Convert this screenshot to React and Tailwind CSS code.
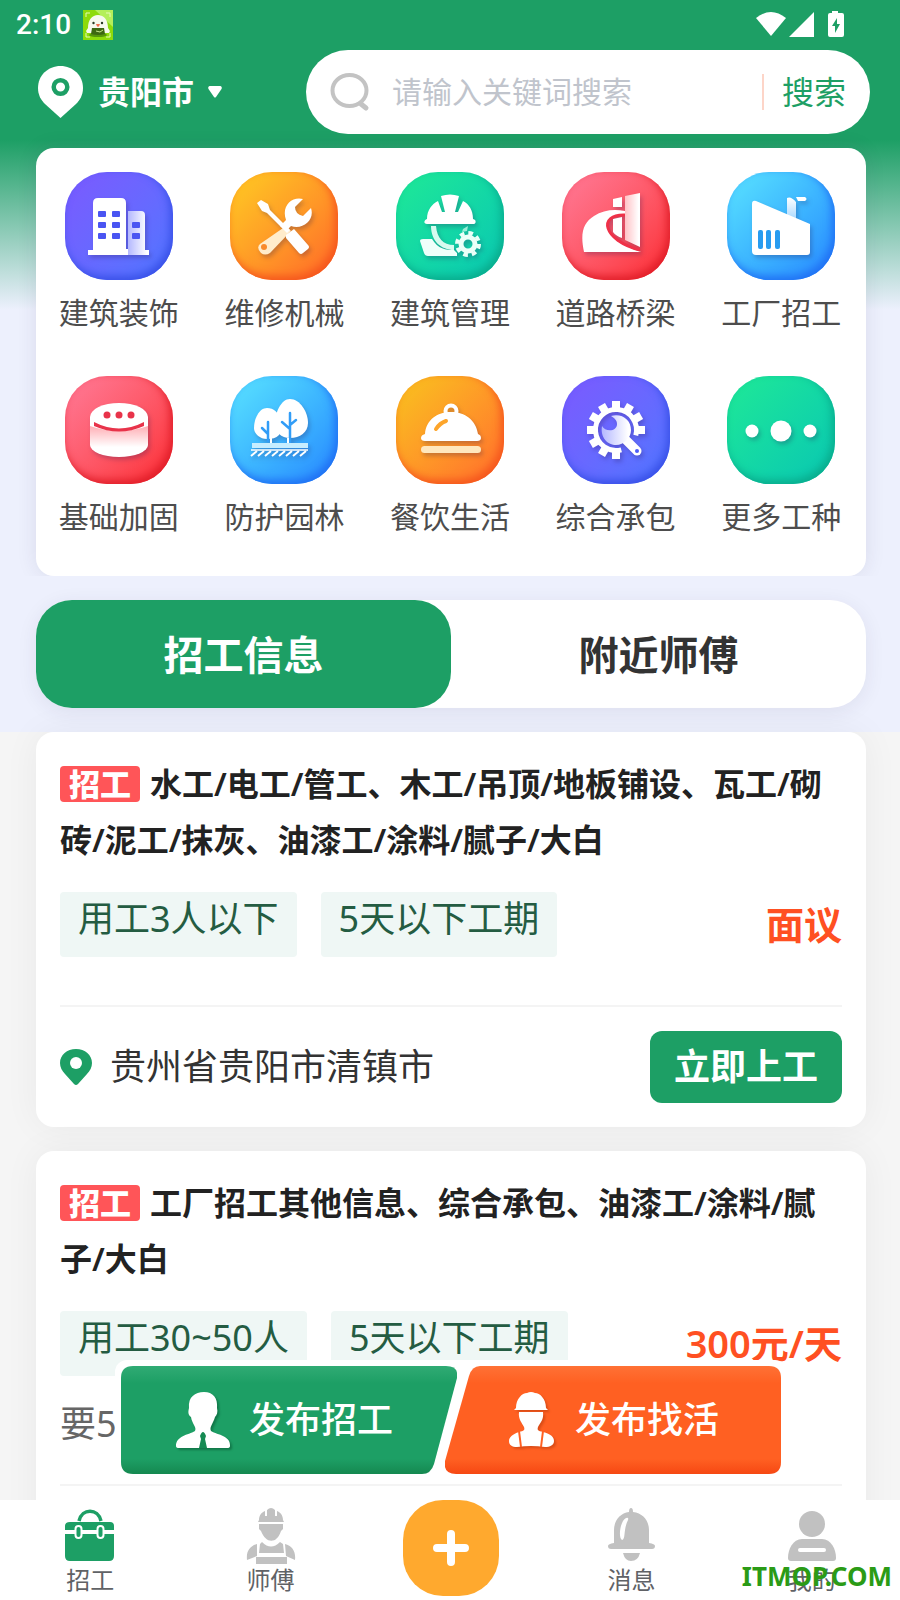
import { useState } from 'react'

const BuildingIcon = () => (
  <>
    <path d="M63 39h13q4 0 4 4v35h4v5H63z" fill="url(#fadePurple)" />
    <path d="M28 78V31q0-5 5-5h23q5 0 5 5v46h2v6H23v-5z" />
    <g fill="#4a55f2">
      {[39, 50, 61].map((y) => (
        <g key={y}>
          <rect x="33" y={y} width="8" height="6" rx="1" />
          <rect x="47" y={y} width="8" height="6" rx="1" />
          {y > 39 && <rect x="67" y={y} width="8" height="6" rx="1" />}
        </g>
      ))}
    </g>
  </>
)

const ToolsIcon = () => (
  <>
    <path d="M56 54l5 5-21 22q-5 3-9 0-5-5-1-9z" fill="#ffeccb" />
    <circle cx="34" cy="75" r="3" fill="#f98a2b" />
    <path d="M27 31l4-3 7 4 2 6 20 20-3 3-20-20-5-2z" />
    <path d="M56 63l8-6 14 16q2 2 0 4l-5 4q-2 2-4 0L56 66z" />
    <path d="M73 27l-8 8q0 7 8 9l8-8c4 12-8 22-20 18l-5 5-6-5 6-6c-5-14 6-24 17-21z" />
  </>
)

const HelmetIcon = () => (
  <>
    <path d="M31 47C31 38 36 32 42 29l4 11h3L45 24q9-3 18 0l-4 16h3l5-11c6 3 10 9 10 18 4 1 3 5 0 5H31c-4 0-3-4 0-5z" />
    <path d="M35 54h5c1 12 7 19 18 19v5C45 78 35 69 35 54z" fill="#d6fbef" />
    <path d="M24 69q0-2 3-2h9c6 10 14 11 22 11l3 3v3H32q-3 0-4-3z" fill="#effffa" />
    <circle cx="72" cy="72" r="7" fill="none" stroke="#eafff8" strokeWidth="5" />
    <circle cx="72" cy="72" r="11" fill="none" stroke="#eafff8" strokeWidth="4" strokeDasharray="4.64 4" />
    <path d="M67 57l5-3-1 5-5 1z" fill="#9deed8" />
  </>
)

const RoadIcon = () => (
  <>
    <path d="M51 27l9-2v10h-9zM51 47l9-2v21q-6-2-9-6z" />
    <path d="M63 24l15-3v54l-15-7z" fill="url(#fadePink)" />
    <path d="M22 80C18 61 21 51 32 44c9-6 20-7 31-5v3C52 43 46 47 46 55c0 13 20 20 33 25z" />
    <path d="M63 43c-27-1-23 25 15 35" fill="none" stroke="#ef3148" strokeWidth="3" />
  </>
)

const FactoryIcon = () => (
  <>
    <path d="M60 26q4-2 9 4v17l-9-4z" fill="url(#fadeBlue)" />
    <path d="M69 25h9q3 2 0 4h-7z" />
    <path d="M25 32q0-4 4-3l54 23v28q0 3-3 3H29q-4 0-4-4z" />
    <g fill="#289cf0">
      <rect x="31" y="58" width="5" height="19" rx="2" />
      <rect x="39" y="58" width="5" height="19" rx="2" />
      <rect x="48" y="58" width="5" height="19" rx="2" />
    </g>
  </>
)

const PileIcon = () => (
  <>
    <path d="M25 48v21a29 12 0 0 0 58 0V48z" fill="url(#fadePinkDown)" />
    <ellipse cx="54" cy="41" rx="29" ry="14" />
    <path d="M25 41v9q29 10 58 0v-9z" />
    <path d="M29 46q25 13 50 0v4q-25 11-50 0z" fill="#e8334a" />
    <g fill="#e8334a">
      <circle cx="42" cy="39" r="3.5" />
      <circle cx="54" cy="39" r="3.5" />
      <circle cx="66" cy="39" r="3.5" />
    </g>
  </>
)

const TreesIcon = () => (
  <>
    <path d="M37 32C29 32 24 43 24 52c0 6 6 11 13 11 5 0 9-1 12-4 4-9 2-27-12-27z" />
    <path d="M60 23c-9 0-15 14-15 24 0 9 6 15 15 15 10 0 18-6 18-15 0-11-8-24-18-24z" />
    <path d="M38 46v19M38 58l-6-6M60 37v29M60 53l-8-7M60 49l6-5" fill="none" stroke="#329df7" strokeWidth="2.5" strokeLinecap="round" />
    <path d="M41 60v8M58 62v6" stroke="#fff" strokeWidth="2" />
    <path d="M22 67h56v5H22z" fill="#c6edff" />
    <path d="M21 74h57" stroke="#fff" strokeWidth="1.5" />
    <path d="M21 80l6-5M28 80l6-5M35 80l6-5M42 80l6-5M49 80l6-5M56 80l6-5M63 80l6-5M70 80l6-5" stroke="#fff" strokeWidth="2" />
  </>
)

const ClocheIcon = () => (
  <>
    <circle cx="55" cy="35" r="5.5" fill="none" stroke="#fff" strokeWidth="4" />
    <path d="M29 58C30 44 41 36 55 36s25 8 27 22q3 1 3 4t-4 3H29q-4 0-4-3t4-4z" />
    <path d="M40 53q4-6 10-8" fill="none" stroke="#fda52b" strokeWidth="4" strokeLinecap="round" />
    <rect x="25" y="70" width="60" height="7" rx="3.5" fill="#ffe7bd" />
  </>
)

const GearWrenchIcon = () => (
  <>
    <path d="M59.3 73.8A20.5 20.5 0 1 1 73.8 59.3" fill="none" stroke="#fff" strokeWidth="5" />
    {[0, 90, 120, 150, 180, 210, 240, 270, 300, 330].map((deg) => (
      <rect key={deg} x="74" y="50" width="9" height="8" transform={`rotate(${deg} 54 54)`} />
    ))}
    <path d="M62 62l13 13" stroke="#fff" strokeWidth="9" strokeLinecap="round" />
    <path d="M49 40c11-3 20 4 20 14 0 8-7 15-15 15S38 62 40 50c3 6 15 6 15-2 0-4-3-6-6-8z" fill="url(#fadePurple)" />
    <circle cx="75" cy="75" r="2" fill="#4c5cf8" />
  </>
)

const DotsIcon = () => (
  <>
    <circle cx="25" cy="55" r="6.5" />
    <circle cx="54" cy="55" r="10.5" />
    <circle cx="83" cy="55" r="6.5" />
  </>
)

const PURPLE = 'from-[#7b59ff] to-[#4d76ff] shadow-[inset_-3px_-4px_8px_#3950e8]'
const ORANGE = 'from-[#ffcc22] to-[#ff6428] shadow-[inset_-3px_-4px_8px_#f5561d]'
const AMBER = 'from-[#f8c31d] to-[#ff6a2c] shadow-[inset_-3px_-4px_8px_#f5561d]'
const GREEN = 'from-[#1fe996] to-[#0ac6b2] shadow-[inset_-3px_-4px_8px_#09ac8c]'
const RED = 'from-[#ff7a98] to-[#fb2630] shadow-[inset_-3px_-4px_8px_#e01f2a]'
const BLUE = 'from-[#5be4ff] to-[#2a86ff] shadow-[inset_-3px_-4px_8px_#2071f4]'

const categories = [
  { name: '建筑装饰', tile: PURPLE, Icon: BuildingIcon },
  { name: '维修机械', tile: ORANGE, Icon: ToolsIcon },
  { name: '建筑管理', tile: GREEN, Icon: HelmetIcon },
  { name: '道路桥梁', tile: RED, Icon: RoadIcon },
  { name: '工厂招工', tile: BLUE, Icon: FactoryIcon },
  { name: '基础加固', tile: RED, Icon: PileIcon },
  { name: '防护园林', tile: BLUE, Icon: TreesIcon },
  { name: '餐饮生活', tile: AMBER, Icon: ClocheIcon },
  { name: '综合承包', tile: PURPLE, Icon: GearWrenchIcon },
  { name: '更多工种', tile: GREEN, Icon: DotsIcon },
]

const jobs = [
  {
    id: 1,
    title: '水工/电工/管工、木工/吊顶/地板铺设、瓦工/砌砖/泥工/抹灰、油漆工/涂料/腻子/大白',
    tags: ['用工3人以下', '5天以下工期'],
    price: '面议',
    place: '贵州省贵阳市清镇市',
  },
  {
    id: 2,
    title: '工厂招工其他信息、综合承包、油漆工/涂料/腻子/大白',
    tags: ['用工30~50人', '5天以下工期'],
    price: '300元/天',
    note: '要5',
  },
]

// Shared gradients used by the category icons
const IconDefs = () => (
  <svg width="0" height="0" className="absolute" aria-hidden="true">
    <defs>
      <linearGradient id="fadePurple">
        <stop offset="0" stopColor="#b4b8ff" />
        <stop offset="0.9" stopColor="#fff" />
      </linearGradient>
      <linearGradient id="fadePink">
        <stop offset="0" stopColor="#ffc2c6" />
        <stop offset="0.9" stopColor="#fff" />
      </linearGradient>
      <linearGradient id="fadePinkDown" x1="0" y1="0" x2="0" y2="1">
        <stop offset="0.1" stopColor="#ffb3b9" />
        <stop offset="0.7" stopColor="#fff" />
      </linearGradient>
      <linearGradient id="fadeBlue" x1="0" y1="0" x2="0" y2="1">
        <stop offset="0" stopColor="#fff" />
        <stop offset="1" stopColor="#a9d9ff" />
      </linearGradient>
    </defs>
  </svg>
)

const StatusBar = () => (
  <div className="flex h-[50px] items-center justify-between pr-14 pl-4 text-white">
    <div className="flex items-center gap-3">
      <span className="font-['Roboto',sans-serif] text-[28px] leading-none font-medium">2:10</span>
      <svg width="30" height="30" viewBox="0 0 30 30">
        <rect width="30" height="30" fill="#8edb0b" />
        <path d="M12 0h18v17z" fill="#b4ef5a" />
        <path d="M3 7V3h4M23 3h4v4M3 23v4h4M27 23v4h-4" fill="none" stroke="#e4fbb5" />
        <ellipse cx="15" cy="25" rx="9" ry="2" fill="#56960c" />
        <path d="M5 18C5 10 9 5 15 5s10 5 10 13l2 3-1 2H4l-1-2z" fill="#f6f9ee" />
        <path d="M9 18h12l1 6q-7 2-14 0z" fill="#3d6812" />
        <path d="M13 21l4 1 3-2" fill="none" stroke="#c7e58b" />
        <circle cx="10.5" cy="13" r="1.2" fill="#2b3b24" />
        <circle cx="19" cy="13" r="1.2" fill="#2b3b24" />
        <path d="M13 14h4q-1 3-2 3t-2-3z" fill="#ef6b4c" />
      </svg>
    </div>
    <svg width="88" height="28" viewBox="0 0 88 28" fill="#fff">
      <path d="M0 7Q15-5 30 7L15 25z" />
      <path d="M33 26L58 1v25z" />
      <path d="M76 0h6v2h4q2 0 2 2v20q0 2-2 2H74q-2 0-2-2V4q0-2 2-2h2z" />
      <path d="M81 7l-5 8h3v7l5-9h-3z" fill="#1d9f65" />
    </svg>
  </div>
)

const TopBar = () => (
  <div className="flex items-center pr-[30px] pl-[38px]">
    <button type="button" className="flex w-[268px] items-center text-[32px] leading-[48px] font-bold text-white">
      <svg width="45" height="52" viewBox="0 0 45 52" className="mr-[15px]">
        <path d="M22.5 0C10 0 0 9.500 0 22c0 7 3 12 7 16l15.500 14L38 38c4-4 7-9 7-16C45 9.500 35 0 22.500 0z" fill="#fff" />
        <circle cx="22.500" cy="21" r="6.800" fill="#fff" stroke="#1d9f65" strokeWidth="4.500" />
      </svg>
      贵阳市
      <svg width="14" height="12" viewBox="0 0 14 12" className="ml-3.5">
        <path d="M1.500 0h11q2 1 1 3L8 11q-1 1-2 0L.5 3q-1-2 1-3z" fill="#fff" />
      </svg>
    </button>
    <form role="search" className="flex h-[84px] min-w-0 flex-1 items-center rounded-full bg-white pr-6 pl-6" onSubmit={(e) => e.preventDefault()}>
      <svg width="40" height="40" viewBox="0 0 40 40" fill="none" stroke="#c3c3c3" strokeLinecap="round">
        <ellipse cx="19.500" cy="18.500" rx="17" ry="15.500" strokeWidth="4" />
        <path d="M31 32l5 4" strokeWidth="5" />
      </svg>
      <input
        type="text"
        aria-label="搜索关键词"
        placeholder="请输入关键词搜索"
        className="ml-[22px] h-12 min-w-0 flex-1 bg-transparent text-[30px] leading-[48px] outline-none placeholder:text-[#c0c4cc]"
      />
      <span className="h-9 w-0.5 bg-[#fdd5c8]" />
      <button type="submit" className="ml-[18px] text-[32px] leading-[48px] text-[#1d9f65]">搜索</button>
    </form>
  </div>
)

const CategoryGrid = () => (
  <section className="mt-3.5 mr-[34px] ml-9 grid grid-cols-5 gap-y-[38px] rounded-[18px] bg-white pt-6 pr-0.5 pb-[34px] shadow-[0_0_20px_rgba(50,40,80,0.1)] [clip-path:inset(-30px_-30px_0)]">
    {categories.map(({ name, tile, Icon }) => (
      <a key={name} href="#" className="flex flex-col items-center">
        <span className={`size-[108px] rounded-[42px] bg-linear-to-br ${tile}`}>
          <svg viewBox="0 0 108 108" fill="#fff" className="size-full drop-shadow-[2px_3px_2px_rgba(40,20,80,0.25)]">
            <Icon />
          </svg>
        </span>
        <span className="mt-2 text-[30px] leading-[50px] text-[#4d4d4d]">{name}</span>
      </a>
    ))}
  </section>
)

const Tabs = () => {
  const [active, setActive] = useState('招工信息')

  return (
    <div role="tablist" className="mt-6 mr-[34px] ml-9 flex rounded-[36px] bg-white shadow-[0_4px_20px_rgba(50,40,80,0.08)]">
      {['招工信息', '附近师傅'].map((tab) => (
        <button
          key={tab}
          type="button"
          role="tab"
          aria-selected={tab === active}
          onClick={() => setActive(tab)}
          className={`h-[108px] flex-1 rounded-[36px] pt-0.5 text-[40px] font-bold ${tab === active ? 'bg-[#1d9f65] text-white' : 'text-[#333]'}`}
        >
          {tab}
        </button>
      ))}
    </div>
  )
}

const JobCard = ({ job }) => (
  <article className="rounded-[18px] bg-white p-6 shadow-[0_0_36px_rgba(0,0,0,0.05)]">
    <h2 className="text-[32px] leading-[56px] font-semibold text-[#222]">
      <span className="mr-2.5 inline-flex h-9 w-20 items-center justify-center rounded bg-[#ff5558] align-baseline text-[31px] leading-9 font-black text-white">招工</span>
      {job.title}
    </h2>
    <div className="mt-6 flex items-center gap-6">
      {job.tags.map((tag) => (
        <span key={tag} className="h-[65px] rounded bg-[#eff7f5] px-[18px] text-[36px] leading-[54px] text-[#245c42]">{tag}</span>
      ))}
      <strong className="ml-auto text-[38px] leading-[65px] font-semibold text-[#ff5022]">{job.price}</strong>
    </div>
    {job.note && <p className="mt-[18px] -mb-[18px] text-[36px] leading-[60px] text-[#666]">{job.note}</p>}
    <hr className="mt-12 border-t-2 border-[#f4f4f4]" />
    <div className="mt-6 flex h-[72px] items-center">
      {job.place && (
        <>
          <svg width="32" height="36" viewBox="0 0 32 36" className="mr-[18px]">
            <path d="M16 0C7 0 0 6 0 14c0 4 2 8 5 11l9 10q2 2 4 0l9-10c3-3 5-7 5-11C32 6 25 0 16 0z" fill="#1d9f65" />
            <circle cx="16" cy="14" r="6" fill="#fff" />
          </svg>
          <span className="text-[36px] leading-[54px] text-[#333]">{job.place}</span>
          <button type="button" className="ml-auto h-[72px] rounded-xl bg-[#1d9f65] px-6 text-[36px] font-bold text-white">立即上工</button>
        </>
      )}
    </div>
  </article>
)

const PublishBar = () => (
  <div className="absolute right-[113px] bottom-[120px] flex w-[672px] rounded-xl bg-white p-1.5">
    <svg width="0" height="0" className="absolute" aria-hidden="true">
      <defs>
        <linearGradient id="greenBtn" x1="0" y1="0" x2="0" y2="1">
          <stop offset="0" stopColor="#30ab74" />
          <stop offset="0.16" stopColor="#1d9f65" />
          <stop offset="0.86" stopColor="#1d9f65" />
          <stop offset="1" stopColor="#158850" />
        </linearGradient>
        <linearGradient id="orangeBtn" x1="0" y1="0" x2="0" y2="1">
          <stop offset="0" stopColor="#ff7135" />
          <stop offset="0.16" stopColor="#ff6022" />
          <stop offset="0.86" stopColor="#ff6022" />
          <stop offset="1" stopColor="#f64813" />
        </linearGradient>
      </defs>
    </svg>
    <button type="button" className="relative flex h-[108px] w-[336px] items-center pl-[54px] text-[36px] font-medium text-white">
      <svg viewBox="0 0 336 108" className="absolute inset-0 size-full">
        <path d="M12 0H325q13 0 11 12L313 98q-3 10-12 10H12Q0 108 0 96V12Q0 0 12 0z" fill="url(#greenBtn)" />
      </svg>
      <svg width="56" height="56" viewBox="0 0 56 56" className="relative drop-shadow-[2px_2px_1px_rgba(0,60,30,0.4)]">
        <path d="M29 0c9 0 14 6 13 16 1 4 0 7-2 9-2 7-6 10-4 14 7 4 20 5 19 15q0 2-3 2H4q-3 0-3-2C1 44 13 43 20 39c2-4-3-7-4-14-3-2-3-5-2-9C13 5 20 0 29 0z" fill="#fff" />
        <path d="M25 44q3-8 6 0l-1 3 2 9h-8l2-9z" fill="#168a53" />
      </svg>
      <span className="relative ml-[18px]">发布招工</span>
    </button>
    <button type="button" className="relative -ml-3 flex h-[108px] w-[336px] items-center pl-[62px] text-[36px] font-medium text-white">
      <svg viewBox="0 0 336 108" className="absolute inset-0 size-full">
        <path d="M35 0H324q12 0 12 12V96q0 12-12 12H11Q-2 108 0 95L24 10Q27 0 35 0z" fill="url(#orangeBtn)" />
      </svg>
      <svg width="48" height="56" viewBox="0 0 48 56" className="relative drop-shadow-[2px_2px_1px_rgba(150,40,0,0.35)]">
        <path d="M9 16C9 7 15 1 20 1q4-2 8 0c5 0 11 6 11 15l2 2H7z" fill="#fff" />
        <path d="M12 20h24c1 8-3 11-5 15-1 3 0 4 5 5 8 2 11 5 11 9 0 4-4 6-9 6q-14-2-28 0c-5 0-8-2-8-6 0-4 4-7 10-9 5-1 6-2 5-5-2-4-6-8-5-15z" fill="#fff" />
        <path d="M12 39l2 16M36 39l-2 16" stroke="#ff6022" strokeWidth="2" />
      </svg>
      <span className="relative ml-5">发布找活</span>
    </button>
  </div>
)

const TabItem = ({ label, children }) => (
  <a href="#" className="flex flex-col items-center text-2xl leading-8 text-[#606266]">
    <svg width="50" height="56" viewBox="0 0 50 56" fill="#c1c1c1" className="mt-2">{children}</svg>
    {label}
  </a>
)

const BottomNav = () => (
  <nav className="relative z-10 -mr-0.5 grid h-[100px] shrink-0 grid-cols-5 bg-white">
    <TabItem label="招工">
      <path d="M14 13C17 0 33 0 36 13" fill="none" stroke="#1d9f65" strokeWidth="3.500" />
      <g fill="#1d9f65">
        <path d="M5 14h40q4 0 4 4v4H0v-4q0-4 5-4zM0 26h49v22q0 5-5 5H5q-5 0-5-5z" />
        <rect x="10.500" y="18" width="6" height="12" rx="3" stroke="#fff" strokeWidth="2" />
        <rect x="32.500" y="18" width="6" height="12" rx="3" stroke="#fff" strokeWidth="2" />
      </g>
    </TabItem>
    <TabItem label="师傅">
      <path d="M13 12C13 7 16 4 19 3v5h2V2q4-4 8 0v6h2V3c3 1 6 4 6 9l1 2H12zM13 16h24v5l-2 2c-4 13-15 13-20 0l-2-2zM16 34q9 9 18 0l3 2 1 9H13l1-9zM11 36v12l-10 4C0 43 4 38 11 36zM39 36c7 2 11 7 10 16l-9-4zM10 49h31v7H10z" />
    </TabItem>
    <div className="flex justify-center">
      <button type="button" aria-label="发布" className="flex size-24 items-center justify-center rounded-[40px] bg-[#ffa92e]">
        <svg width="36" height="36" viewBox="0 0 36 36" stroke="#fff" strokeWidth="8" strokeLinecap="round">
          <path d="M18 4v28M4 18h28" />
        </svg>
      </button>
    </div>
    <TabItem label="消息">
      <path d="M25 0q2 0 2 4c10 1 16 9 16 18v13q6 1 6 3 0 3-3 3H5q-3 0-3-3 0-2 6-3V22C8 13 14 5 23 4q0-4 2-4zM17 45h17q-2 8-9 8-6 0-8-8z" />
      <path d="M20 10c-6 3-8 20-4 22 4-1 1-10 6-20q1-3-2-2z" fill="#fff" />
    </TabItem>
    <TabItem label="我的">
      <circle cx="25" cy="16" r="13" />
      <path d="M15 31h20c9 0 14 10 14 19q0 3-3 3H4q-3 0-3-3C1 41 6 31 15 31z" />
      <rect x="11" y="40" width="28" height="4" rx="2" fill="#fff" />
    </TabItem>
    <span className="absolute right-2.5 bottom-2 text-[26px] leading-8 font-bold text-[#2b9b16]">ITMOP.COM</span>
  </nav>
)

const App = () => {
  return (
    <div lang="zh-CN" className="relative flex h-screen flex-col overflow-hidden bg-[#f5f5f5] font-['Noto_Sans','Noto_Sans_CJK_SC',sans-serif]">
      <IconDefs />
      <main className="min-h-0 flex-1 overflow-y-auto [scrollbar-width:none]">
        <div className="bg-[#edf0fd] bg-[linear-gradient(#1d9f65_140px,#edf0fd_310px)] pb-6">
          <StatusBar />
          <TopBar />
          <CategoryGrid />
          <Tabs />
        </div>
        <div className="flex flex-col gap-6 pr-[34px] pl-9">
          {jobs.map((job) => (
            <JobCard key={job.id} job={job} />
          ))}
        </div>
      </main>
      <PublishBar />
      <BottomNav />
    </div>
  )
}

export default App
